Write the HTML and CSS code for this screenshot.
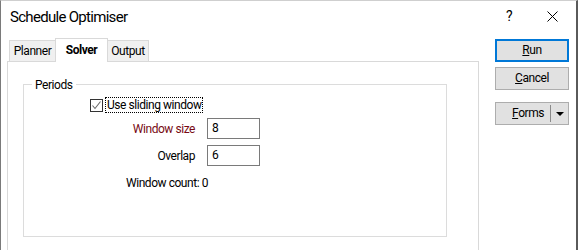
FILE: index.html
```html
<!DOCTYPE html>
<html>
<head>
<meta charset="utf-8">
<link rel="stylesheet" href="styles.css">
</head>
<body>
<div class="window">
  <div class="titlebar">
    <div class="title">Schedule Optimiser</div>
    <div class="help">?</div>
    <div class="close">
      <svg width="11" height="11" viewBox="0 0 11 11"><path d="M0.5 0.5L10.5 10.5M10.5 0.5L0.5 10.5" stroke="#000" stroke-width="1" fill="none"/></svg>
    </div>
  </div>
  <div class="main">
    <div class="tabctl">
      <div class="tabstrip">
        <div class="tab tab-planner">Planner</div>
        <div class="tab tab-solver selected">Solver</div>
        <div class="tab tab-output">Output</div>
      </div>
      <div class="panel">
        <div class="group">
          <span class="group-title">Periods</span>
          <div class="check-row">
            <span class="checkbox">
              <svg width="11" height="11" viewBox="0 0 11 11"><path d="M1.5 5.5L4 8.5L9.5 1.5" stroke="#6a6a6a" stroke-width="1.1" fill="none"/></svg>
            </span>
            <span class="check-label">Use sliding window</span>
          </div>
          <div class="field-row">
            <span class="field-label red">Window size</span>
            <span class="input">8</span>
          </div>
          <div class="field-row">
            <span class="field-label">Overlap</span>
            <span class="input">6</span>
          </div>
          <div class="count">Window count: 0</div>
        </div>
      </div>
    </div>
    <div class="buttons">
      <div class="btn default"><span class="u">R</span>un</div>
      <div class="btn"><span class="u">C</span>ancel</div>
      <div class="btn split">
        <span class="split-text"><span class="u">F</span>orms</span>
        <span class="split-sep"></span>
        <span class="split-arrow"><svg width="8" height="4" viewBox="0 0 8 4"><path d="M0 0H8L4 4Z" fill="#000"/></svg></span>
      </div>
    </div>
  </div>
</div>
</body>
</html>
```

FILE: styles.css
```css
* { box-sizing: border-box; }
html, body { margin: 0; padding: 0; background: #fff; }
body {
  font-family: Roboto, "Noto Sans", sans-serif;
  font-size: 12px;
  letter-spacing: -0.45px;
  color: #000;
}
.window {
  width: 578px;
  height: 250px;
  overflow: hidden;
  background: #fff;
  border-top: 1px solid #cfcfcf;
  border-left: 1px solid #7a7a7a;
  border-right: 2px solid #5a5a5a;
}
.titlebar {
  height: 37px;
  display: flex;
  align-items: flex-start;
}
.title {
  font-size: 15px;
  letter-spacing: -0.7px;
  line-height: 20px;
  padding: 6px 0 0 9px;
  flex: 1;
}
.help {
  font-size: 14px;
  line-height: 18px;
  padding-top: 6px;
  width: 10px;
  margin-right: 30px;
}
.close {
  padding-top: 10px;
  width: 30px;
  padding-left: 1px;
}
.close svg { display: block; }
.main {
  display: flex;
  align-items: flex-start;
}
.tabctl {
  margin-left: 6px;
  width: 472px;
}
.tabstrip {
  display: flex;
  align-items: flex-end;
  height: 23px;
  padding-left: 2px;
}
.tab {
  height: 21px;
  background: #f0f0f0;
  border: 1px solid #d9d9d9;
  border-bottom: none;
  text-align: center;
  line-height: 21px;
}
.tab-planner { width: 47px; }
.tab-solver { width: 53px; margin-left: -1px; }
.tab-output { width: 42px; margin-left: -1px; }
.tab.selected {
  height: 24px;
  background: #fff;
  font-weight: bold;
  margin-bottom: -1px;
  position: relative;
  z-index: 1;
  line-height: 22px;
}
.panel {
  height: 200px;
  border: 1px solid #d9d9d9;
  background: #fff;
  padding: 22px 0 0 15px;
}
.group {
  position: relative;
  width: 424px;
  height: 153px;
  border: 1px solid #dcdcdc;
  padding: 12px 0 0 0;
}
.group-title {
  position: absolute;
  left: 8px;
  top: -8px;
  padding: 0 3px;
  background: #fff;
  line-height: 16px;
}
.check-row {
  display: flex;
  align-items: center;
  margin-left: 66px;
  height: 16px;
}
.checkbox {
  width: 13px;
  height: 13px;
  border: 1px solid #333;
  background: #fff;
  display: flex;
  align-items: center;
  justify-content: center;
}
.checkbox svg { display: block; }
.check-label {
  margin-left: 2px;
  outline: 1px dotted #000;
  outline-offset: -1px;
  padding: 0 2px;
  line-height: 16px;
}
.field-row {
  display: flex;
  align-items: center;
  height: 21px;
  margin-top: 6px;
}
.check-row + .field-row { margin-top: 5px; }
.field-label {
  width: 171px;
  text-align: right;
}
.field-label.red { color: #780a14; }
.input {
  margin-left: 12px;
  width: 53px;
  height: 21px;
  border: 1px solid #7a7a7a;
  padding-left: 4px;
  line-height: 18px;
}
.count {
  margin: 9px 0 0 102px;
  line-height: 16px;
}
.buttons {
  margin-left: 16px;
  margin-top: 1px;
  width: 74px;
  display: flex;
  flex-direction: column;
}
.btn {
  height: 23px;
  background: #e1e1e1;
  border: 1px solid #adadad;
  text-align: center;
  line-height: 21px;
  margin-bottom: 5px;
}
.btn.default {
  border: 2px solid #0078d7;
  line-height: 19px;
}
.btn.split {
  margin-top: 7px;
  display: flex;
  align-items: center;
}
.split-text { flex: 1; text-align: right; padding-right: 6px; }
.split-sep {
  width: 1px;
  height: 17px;
  background: #8a8a8a;
}
.split-arrow {
  width: 17px;
  display: flex;
  justify-content: center;
}
.split-arrow svg { display: block; }
.u { text-decoration: underline; }
```
